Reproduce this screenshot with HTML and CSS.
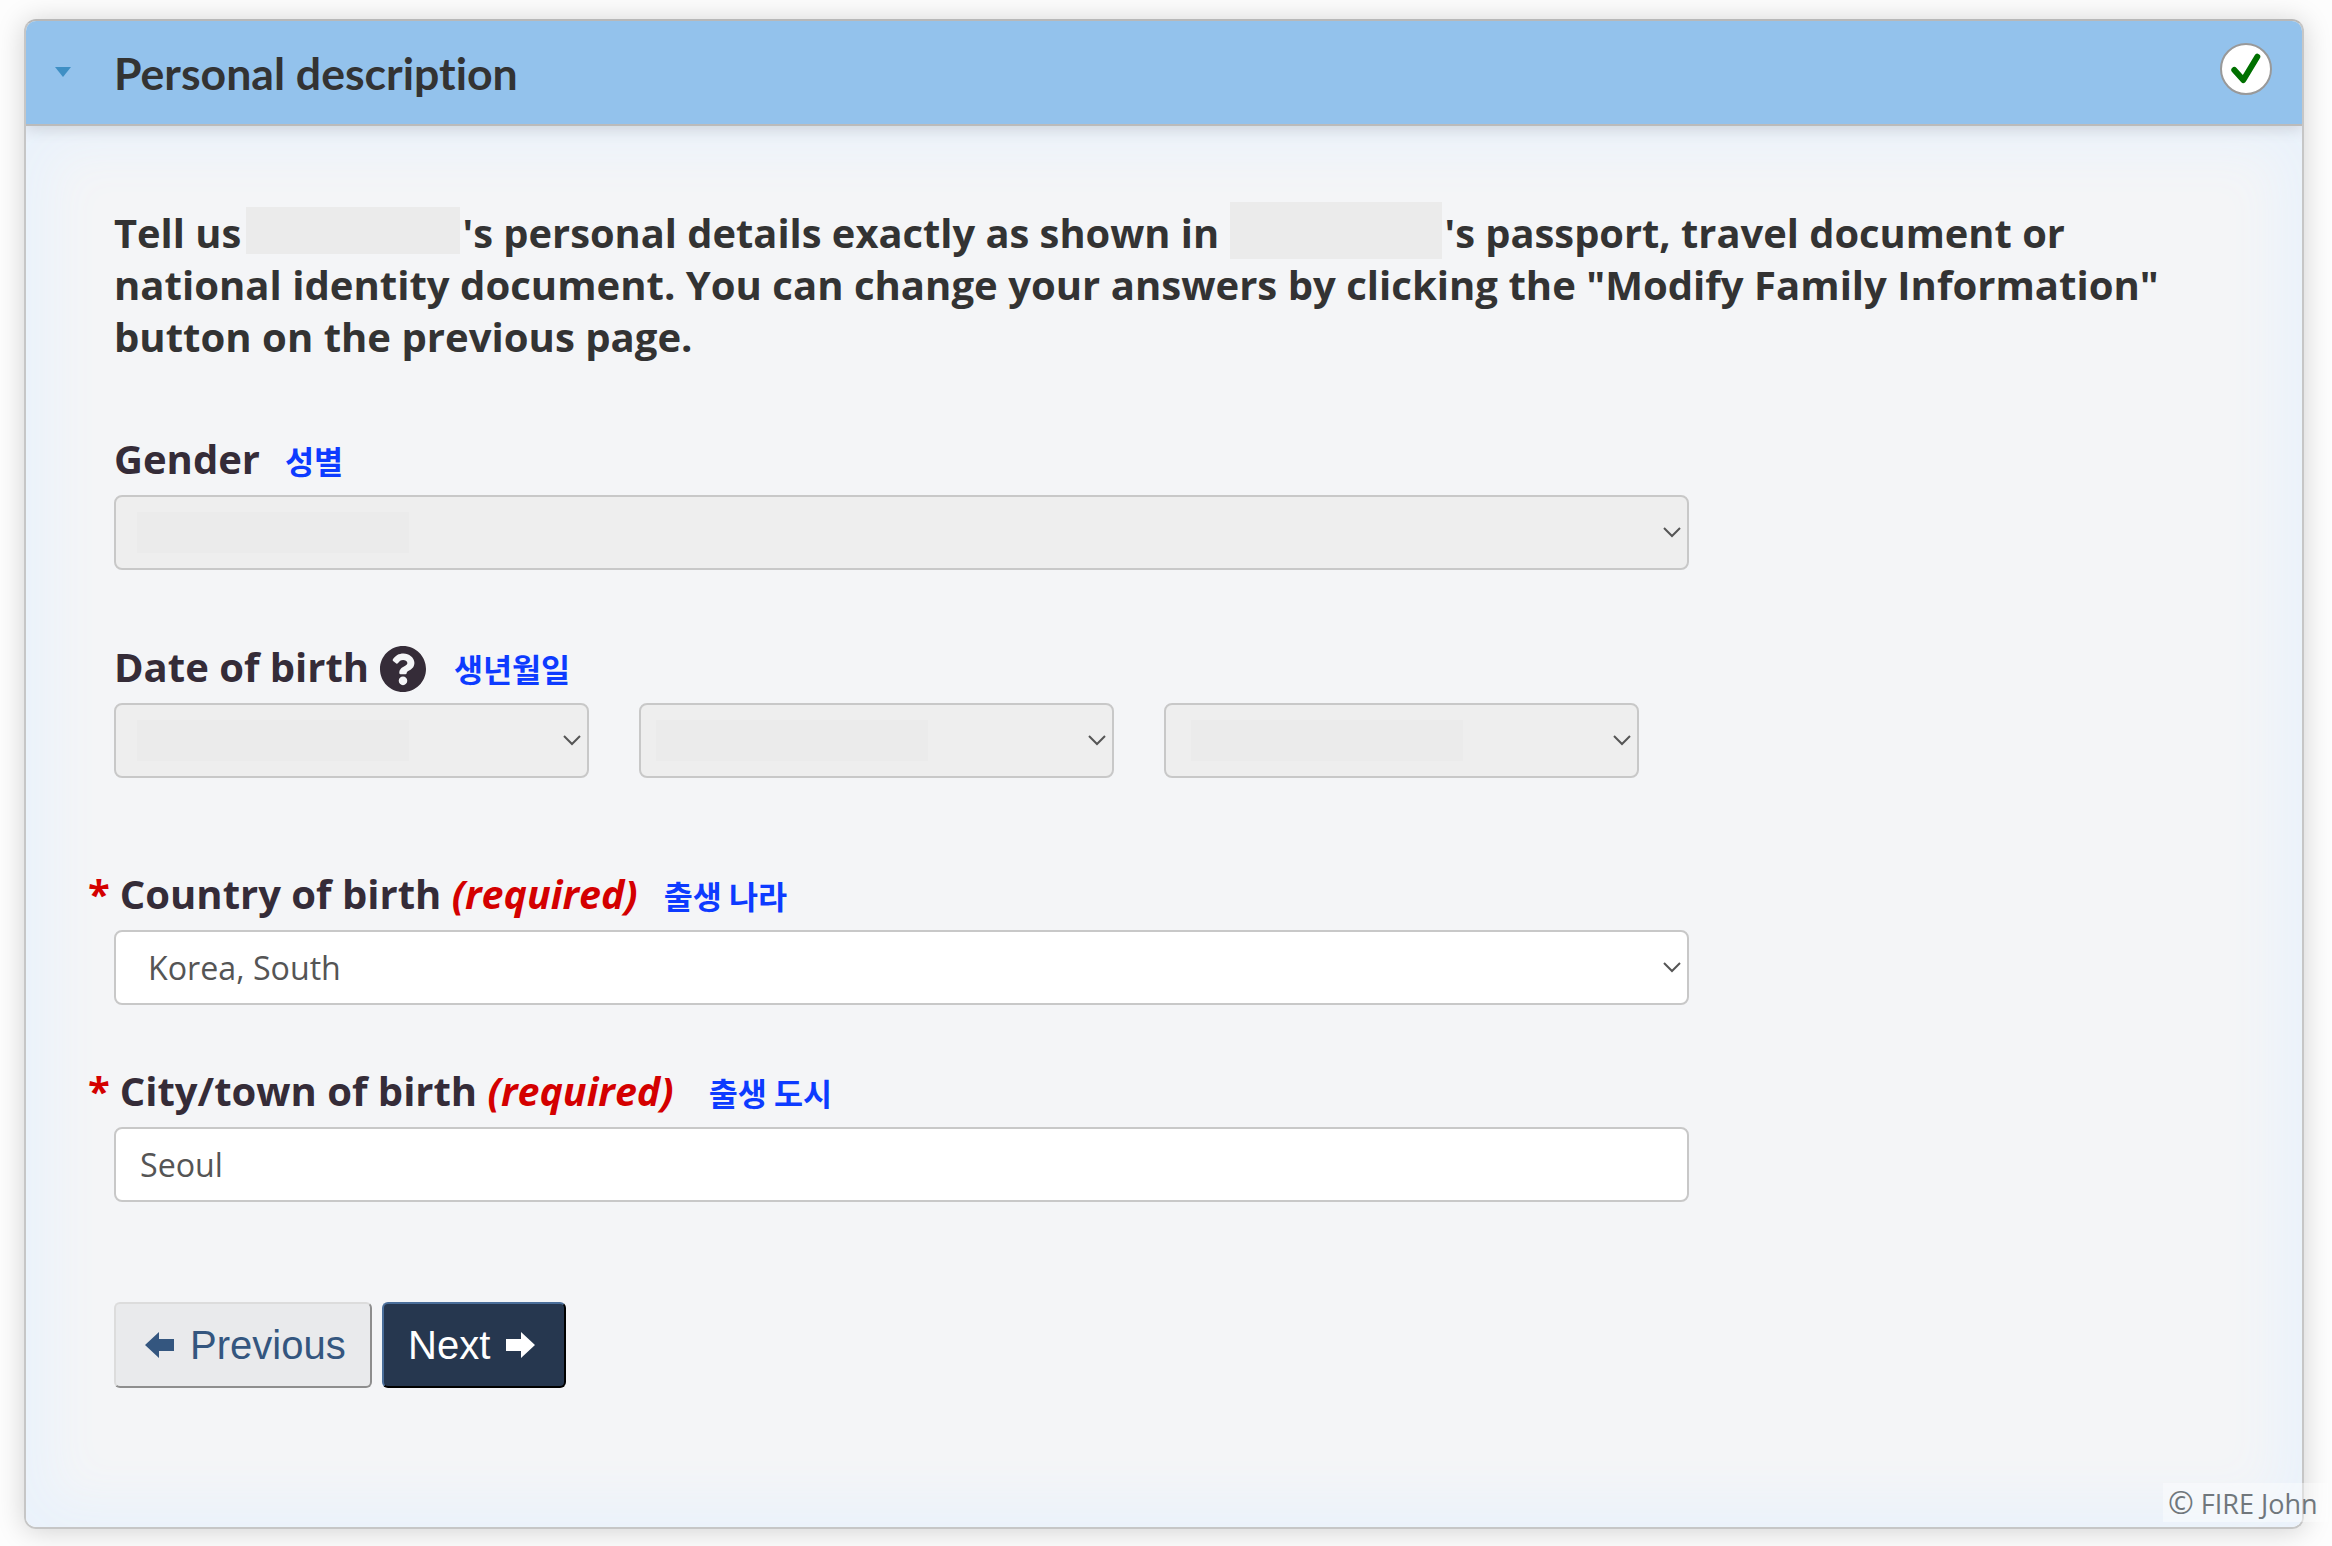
FILE: index.html
```html
<!DOCTYPE html>
<html lang="en">
<head>
  <meta charset="UTF-8" />
  <meta name="viewport" content="width=device-width, initial-scale=1.0"/>
  <title>Personal description</title>
  <link rel="stylesheet" href="styles.css">
</head>
<body>
  <div class="panel">
    <div class="panel-head">
      <span class="caret"></span>
      <h2 class="panel-title">Personal description</h2>
      <span class="done">
        <svg viewBox="0 0 52 52" width="52" height="52"><path d="M14.3 27L23.3 37L37.3 13.7" fill="none" stroke="#007000" stroke-width="6" stroke-linecap="round" stroke-linejoin="round"/></svg>
      </span>
    </div>

    <div class="panel-body">
      <p class="intro"><span class="intro-first">Tell us <span class="redact redact-a"></span>'s personal details exactly as shown in <span class="redact redact-b"></span>'s passport, travel document or</span><br>national identity document. You can change your answers by clicking the "Modify Family Information"<br>button on the previous page.</p>

      <div class="group group-gender">
        <div class="label">Gender<span class="ko ko-gender">성별</span></div>
        <div class="select disabled wide">
          <span class="blank blank-gender"></span>
          <svg class="chev" viewBox="0 0 18 11" width="18" height="11"><path d="M1 1L9 9L17 1" fill="none" stroke="#555" stroke-width="2"/></svg>
        </div>
      </div>

      <div class="group group-date">
        <div class="label">Date of birth
          <svg class="help" viewBox="8 8 496 496" width="46" height="46"><path fill="#352c38" d="M504 256c0 136.997-111.043 248-248 248S8 392.997 8 256C8 119.083 119.043 8 256 8s248 111.083 248 248zM262.655 90c-54.497 0-89.255 22.957-116.549 63.758-3.536 5.286-2.353 12.415 2.715 16.258l34.699 26.31c5.205 3.947 12.621 3.008 16.665-2.122 17.864-22.658 30.113-35.797 57.303-35.797 20.429 0 45.698 13.148 45.698 32.958 0 14.976-12.363 22.667-32.534 33.976C247.128 238.528 216 254.941 216 296v4c0 6.627 5.373 12 12 12h56c6.627 0 12-5.373 12-12v-1.333c0-28.462 83.186-29.647 83.186-106.667 0-58.002-60.165-102-116.531-102zM256 338c-25.365 0-46 20.635-46 46 0 25.364 20.635 46 46 46s46-20.636 46-46c0-25.365-20.635-46-46-46z"/></svg>
          <span class="ko ko-date">생년월일</span>
        </div>
        <div class="date-row">
          <div class="select disabled">
            <span class="blank blank-month"></span>
            <svg class="chev" viewBox="0 0 18 11" width="18" height="11"><path d="M1 1L9 9L17 1" fill="none" stroke="#555" stroke-width="2"/></svg>
          </div>
          <div class="select disabled">
            <span class="blank blank-day"></span>
            <svg class="chev" viewBox="0 0 18 11" width="18" height="11"><path d="M1 1L9 9L17 1" fill="none" stroke="#555" stroke-width="2"/></svg>
          </div>
          <div class="select disabled">
            <span class="blank blank-year"></span>
            <svg class="chev" viewBox="0 0 18 11" width="18" height="11"><path d="M1 1L9 9L17 1" fill="none" stroke="#555" stroke-width="2"/></svg>
          </div>
        </div>
      </div>

      <div class="group group-country">
        <div class="label required"><span class="star">*</span>Country of birth <em>(required)</em><span class="ko ko-country">출생 나라</span></div>
        <div class="select wide">
          <span class="value value-select">Korea, South</span>
          <svg class="chev" viewBox="0 0 18 11" width="18" height="11"><path d="M1 1L9 9L17 1" fill="none" stroke="#555" stroke-width="2"/></svg>
        </div>
      </div>

      <div class="group group-city">
        <div class="label required"><span class="star">*</span>City/town of birth <em>(required)</em><span class="ko ko-city">출생 도시</span></div>
        <div class="select wide">
          <span class="value value-input">Seoul</span>
        </div>
      </div>

      <div class="buttons">
        <a class="btn btn-prev">
          <svg viewBox="0 0 29 26" width="29" height="26"><polygon fill="#34567f" points="0,13 14,0 14,7 29,7 29,19 14,19 14,26"/></svg>
          Previous
        </a>
        <a class="btn btn-next">
          Next
          <svg viewBox="0 0 29 26" width="29" height="26"><polygon fill="#fff" points="29,13 15,0 15,7 0,7 0,19 15,19 15,26"/></svg>
        </a>
      </div>
    </div>
  </div>

  <div class="credit"><span class="copy">©</span> FIRE John</div>
</body>
</html>
```

FILE: styles.css
```css
html, body {
  margin: 0;
  height: 100%;
}

body {
  background: #fdfdfd;
  color: #333;
  font-family: "Open Sans", "Noto Sans CJK KR", sans-serif;
  padding: 19px 28px 0 24px;
  box-sizing: border-box;
  overflow: hidden;
}

.panel {
  border: 2px solid #c6c6c6;
  border-top-color: #b8b8b8;
  border-radius: 12px;
  box-shadow: 0 2px 28px rgba(0,0,0,0.18);
  height: 1510px;
  box-sizing: border-box;
  overflow: hidden;
  display: flex;
  flex-direction: column;
}

.panel-head {
  background: #93c2ec;
  height: 103px;
  border-bottom: 2px solid #bbb;
  flex: none;
  display: flex;
  align-items: center;
  position: relative;
  box-shadow: 0 4px 14px rgba(0,0,0,0.12);
}

.caret {
  width: 0;
  height: 0;
  border-left: 8px solid transparent;
  border-right: 8px solid transparent;
  border-top: 10px solid #3f8fc4;
  margin: 0 0 2px 29px;
}

.panel-title {
  margin: 0 0 0 43px;
  font-family: "Lato", sans-serif;
  font-weight: 700;
  font-size: 44.6px;
  font-variant-ligatures: none;
  color: #333;
  flex: 1;
}

.done {
  width: 52px;
  height: 52px;
  margin: 0 30px 8px 0;
  box-sizing: border-box;
  border: 2px solid #999;
  border-radius: 50%;
  background: radial-gradient(circle, #fff 70%, #eee 100%);
  display: flex;
  align-items: center;
  justify-content: center;
}

.done svg {
  flex: none;
}

.panel-body {
  flex: 1;
  background: #f4f5f7;
  box-shadow: inset 0 0 50px 25px #eaf2fb;
  padding: 81px 0 0 88px;
}

.intro {
  margin: 0;
  font-weight: 700;
  font-size: 40.1px;
  line-height: 52px;
  color: #333;
  white-space: nowrap;
}

.intro-first {
  font-size: 39.85px;
}

.redact {
  display: inline-block;
  background: #ebebeb;
  vertical-align: top;
}

.redact-a {
  width: 214px;
  height: 47px;
  margin: 0 3px 0 -6px;
}

.redact-b {
  width: 212px;
  height: 57px;
  margin: -5px 3px 0 0;
}

.group-gender { margin-top: 72px; }
.group-date { margin-top: 73px; }
.group-country { margin-top: 92px; }
.group-city { margin-top: 62px; }

.label {
  font-weight: 700;
  font-size: 40px;
  line-height: 48px;
  color: #352c38;
  margin-bottom: 11px;
  white-space: nowrap;
}

.required {
  margin-left: -26px;
}

.star {
  color: #d40000;
  margin-right: 10px;
}

.label em {
  color: #d40000;
  font-style: italic;
  font-size: 39.4px;
}

.ko {
  font-family: "Noto Sans CJK KR", sans-serif;
  font-weight: 700;
  font-size: 31.6px;
  color: #0d3bff;
}

.ko-gender { margin-left: 25px; }
.ko-date { margin-left: 18px; }
.ko-country { margin-left: 26px; }
.ko-city { margin-left: 35px; }

.help {
  vertical-align: -10px;
}

.select {
  height: 75px;
  width: 475px;
  box-sizing: border-box;
  border: 2px solid #c8c8c8;
  border-radius: 8px;
  background: #fff;
  display: flex;
  align-items: center;
  justify-content: space-between;
  padding-right: 6px;
}

.wide {
  width: 1575px;
}

.disabled {
  background: #eee;
}

.date-row {
  display: flex;
  gap: 50px;
}

.blank {
  height: 41px;
  width: 272px;
  background: #ebebeb;
}

.blank-gender, .blank-month { margin-left: 21px; }
.blank-day { margin-left: 15px; }
.blank-year { margin-left: 25px; }

.value {
  font-size: 32.2px;
  color: #555;
}

.value-select { margin-left: 32px; }
.value-input { margin-left: 24px; }

.buttons {
  display: flex;
  gap: 10px;
  margin-top: 100px;
}

.btn {
  height: 86px;
  box-sizing: border-box;
  border-radius: 6px;
  border: 2px solid;
  display: flex;
  align-items: center;
  gap: 16px;
  font-family: "Liberation Sans", sans-serif;
  font-size: 40px;
}

.btn-prev {
  width: 258px;
  padding-left: 29px;
  background: #e9eaec;
  color: #34567f;
  border-color: #dcdcdc #8e8e8e #8e8e8e #dcdcdc;
}

.btn-next {
  width: 184px;
  padding-left: 24px;
  background: #26374f;
  color: #fff;
  border-color: #4a6e9a #000 #000 #4a6e9a;
}

.credit {
  position: absolute;
  left: 2163px;
  top: 1483px;
  width: 165px;
  height: 39px;
  line-height: 38px;
  padding-left: 5px;
  box-sizing: border-box;
  background: rgba(255,255,255,0.4);
  color: #70777c;
  font-size: 27px;
  white-space: nowrap;
}

.copy {
  font-size: 31px;
}
```
